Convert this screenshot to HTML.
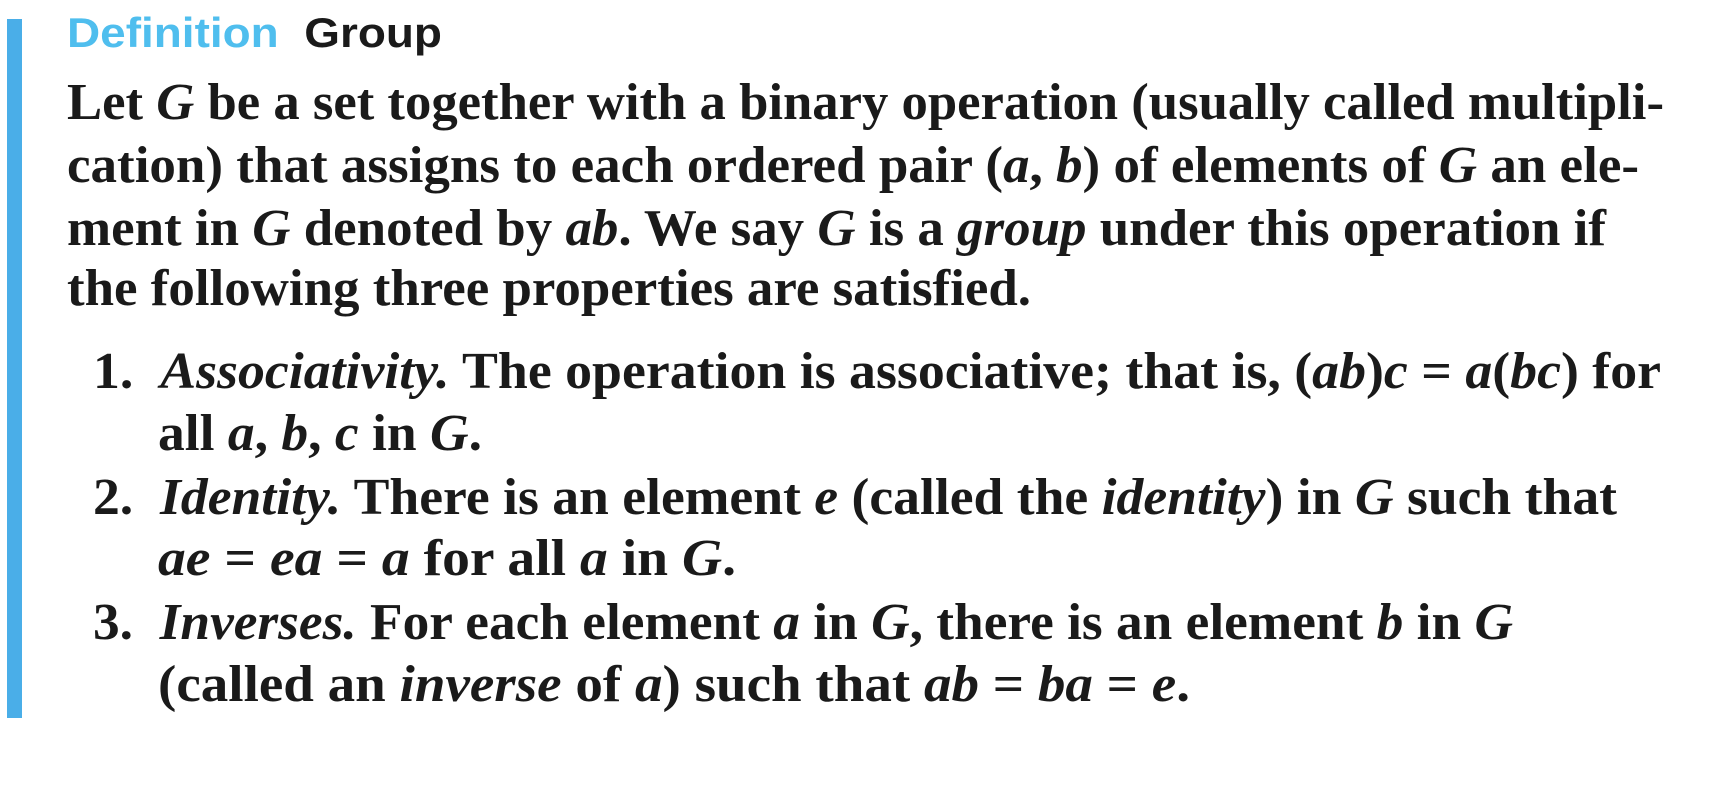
<!DOCTYPE html>
<html><head><meta charset="utf-8"><style>
body{margin:0;width:1720px;height:790px;background:#fff;position:relative;overflow:hidden}
.bar{position:absolute;left:7px;top:19px;width:15px;height:699px;background:#4aaee8}
.t{position:absolute;left:67px;top:12px;font-family:"Liberation Sans",sans-serif;font-weight:bold;font-size:42px;line-height:1;color:#1a1a1a;white-space:nowrap;transform-origin:0 0}
.t span{color:#4fbeee}
.l{position:absolute;font-family:"Liberation Serif",serif;font-weight:bold;font-size:52px;color:#1a1a1a;white-space:nowrap;line-height:1;transform-origin:0 0}
i{font-style:italic}
</style></head><body>
<div class="bar"></div>
<div class="t" data-w="375"><span>Definition</span>&nbsp; Group</div>
<div class="l" data-w="1597" style="left:67px;top:77px">Let <i>G</i> be a set together with a binary operation (usually called multipli-</div>
<div class="l" data-w="1572" style="left:67px;top:140px">cation) that assigns to each ordered pair (<i>a</i>, <i>b</i>) of elements of <i>G</i> an ele-</div>
<div class="l" data-w="1539" style="left:67px;top:203px">ment in <i>G</i> denoted by <i>ab</i>. We say <i>G</i> is a <i>group</i> under this operation if</div>
<div class="l" data-w="964" style="left:67px;top:263px">the following three properties are satisfied.</div>
<div class="l" data-w="1568" style="left:93px;top:346px">1.&nbsp; <i>Associativity.</i> The operation is associative; that is, (<i>ab</i>)<i>c</i> = <i>a</i>(<i>bc</i>) for</div>
<div class="l" data-w="324" style="left:158px;top:408px">all <i>a</i>, <i>b</i>, <i>c</i> in <i>G</i>.</div>
<div class="l" data-w="1524" style="left:93px;top:472px">2.&nbsp; <i>Identity.</i> There is an element <i>e</i> (called the <i>identity</i>) in <i>G</i> such that</div>
<div class="l" data-w="578" style="left:158px;top:533px"><i>ae</i> = <i>ea</i> = <i>a</i> for all <i>a</i> in <i>G</i>.</div>
<div class="l" data-w="1420" style="left:93px;top:597px">3.&nbsp; <i>Inverses.</i> For each element <i>a</i> in <i>G</i>, there is an element <i>b</i> in <i>G</i></div>
<div class="l" data-w="1032" style="left:158px;top:659px">(called an <i>inverse</i> of <i>a</i>) such that <i>ab</i> = <i>ba</i> = <i>e</i>.</div>
<script>
document.querySelectorAll('[data-w]').forEach(function(e){
var w=e.getBoundingClientRect().width;var t=+e.getAttribute('data-w');
if(w>0)e.style.transform='scaleX('+(t/w)+')';});
</script>
</body></html>
